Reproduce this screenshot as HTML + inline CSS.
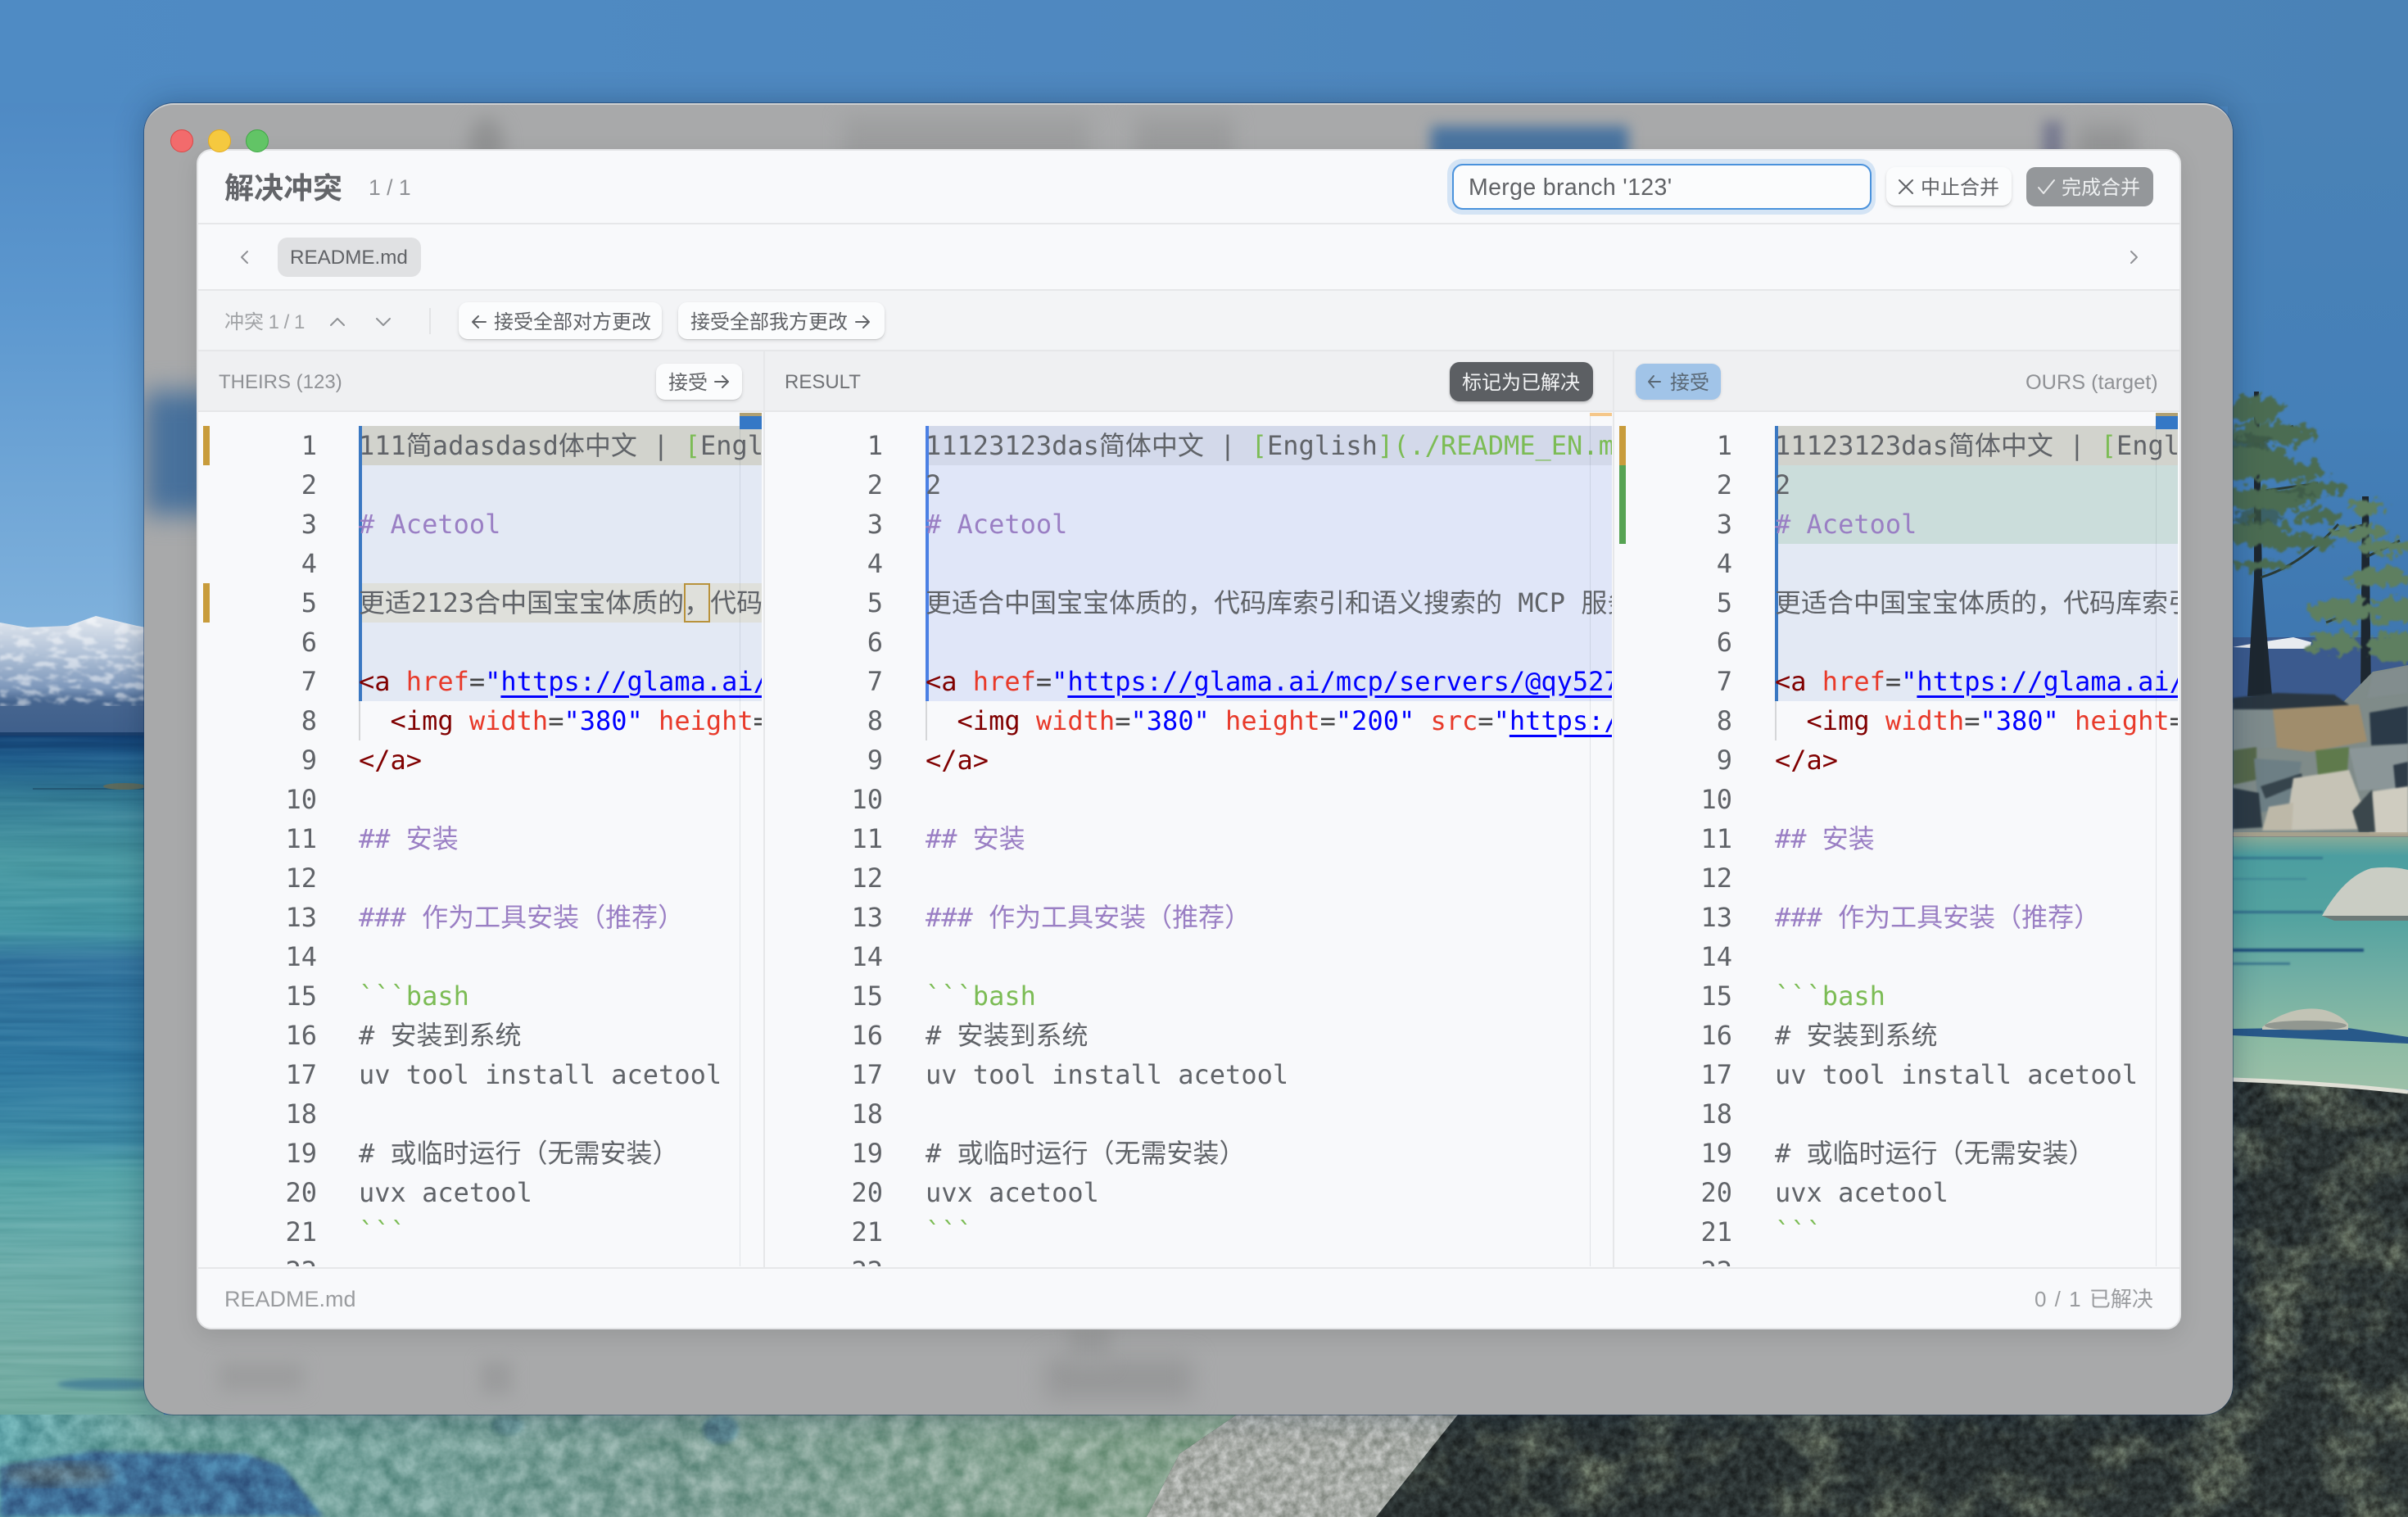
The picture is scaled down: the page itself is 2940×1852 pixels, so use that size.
<!DOCTYPE html>
<html lang="zh-CN"><head><meta charset="utf-8"><title>解决冲突</title>
<style>
html,body{margin:0;padding:0;width:2940px;height:1852px;overflow:hidden;background:#4f8ac4}
body{position:relative;font-family:"Liberation Sans","Noto Sans CJK SC",sans-serif}
.a{position:absolute;box-sizing:border-box}
.t{position:absolute;white-space:nowrap;line-height:40px;height:40px}
.btn{position:absolute;box-sizing:border-box;background:#fbfcfd;border-radius:11px;box-shadow:0 1px 1px rgba(0,0,0,.1),0 2px 4px rgba(0,0,0,.12)}
.ico{position:absolute;overflow:visible;fill:none;stroke-linecap:round;stroke-linejoin:round}
.nums,.code{position:absolute;top:520px;height:1026px;overflow:hidden;font-family:"DejaVu Sans Mono","Noto Sans CJK SC",monospace;font-size:32px;color:#606368}
.nums{text-align:right;width:60px}
.nums div,.code div{height:48px;line-height:48px;white-space:pre}
.h1{background:linear-gradient(#3a78c2,#3a78c2) 0 0/4px 100% no-repeat,#d2d3cd}
.h2{background:linear-gradient(#3a78c2,#3a78c2) 0 0/4px 100% no-repeat,#e3e9f4}
.h3{background:linear-gradient(#3a78c2,#3a78c2) 0 0/4px 100% no-repeat,#dfe0db}
.h4{background:linear-gradient(#3a78c2,#3a78c2) 0 0/4px 100% no-repeat,#cbdddb}
.r1{background:linear-gradient(#4b80e4,#4b80e4) 0 0/4px 100% no-repeat,#d3d9ea}
.r2{background:linear-gradient(#4b80e4,#4b80e4) 0 0/4px 100% no-repeat,#e0e6f8}
.g{background:linear-gradient(#d5d6d8,#d5d6d8) 0 0/2px 100% no-repeat}
.p{color:#9a7fc4}.n{color:#7cbc55}.m{color:#800000}.e{color:#e83a2a}.b{color:#0000ff}.d{color:#444}
.u{color:#0000ff;text-decoration:underline;text-decoration-thickness:3px;text-underline-offset:6px}
</style></head><body>

<svg class="a" style="left:0;top:0" width="2940" height="1852" viewBox="0 0 2940 1852" xmlns="http://www.w3.org/2000/svg">
<defs>
<linearGradient id="top" x1="0" x2="1" y1="0" y2="0"><stop offset="0" stop-color="#4f8bc4"/><stop offset=".5" stop-color="#4f88bf"/><stop offset="1" stop-color="#4a82b6"/></linearGradient>
<linearGradient id="skyL" x1="0" x2="0" y1="0" y2="1"><stop offset="0" stop-color="#4f8ac4"/><stop offset=".4" stop-color="#5d98cf"/><stop offset="1" stop-color="#7fb1dc"/></linearGradient>
<linearGradient id="skyR" x1="0" x2="0" y1="0" y2="1"><stop offset="0" stop-color="#4a82b6"/><stop offset=".5" stop-color="#4580b8"/><stop offset="1" stop-color="#3c74ae"/></linearGradient>
<linearGradient id="mtn" x1="0" x2="0" y1="0" y2="1"><stop offset="0" stop-color="#e4e9f0"/><stop offset=".3" stop-color="#b4c4d9"/><stop offset=".6" stop-color="#7e98bb"/><stop offset=".72" stop-color="#46658f"/><stop offset="1" stop-color="#3f5f8b"/></linearGradient>
<linearGradient id="wL" x1="0" x2="0" y1="897" y2="1852" gradientUnits="userSpaceOnUse">
<stop offset="0" stop-color="#123f72"/><stop offset=".03" stop-color="#1f5c8b"/><stop offset=".08" stop-color="#357d96"/><stop offset=".16" stop-color="#4b9aa3"/><stop offset=".25" stop-color="#4698a6"/><stop offset=".29" stop-color="#31729c"/><stop offset=".42" stop-color="#2f78a0"/><stop offset=".52" stop-color="#3f8ca6"/><stop offset=".56" stop-color="#55a4a8"/><stop offset=".68" stop-color="#6dadaa"/><stop offset=".79" stop-color="#74ada5"/><stop offset=".88" stop-color="#70aa9f"/><stop offset=".93" stop-color="#5f9590"/><stop offset="1" stop-color="#4a8092"/></linearGradient>
<linearGradient id="bot" x1="0" x2="1" y1="0" y2="0"><stop offset="0" stop-color="#5fa3a8"/><stop offset=".12" stop-color="#6fa39e"/><stop offset=".5" stop-color="#7c9f96"/><stop offset="1" stop-color="#8aa68e"/></linearGradient>
<linearGradient id="wR" x1="0" x2="0" y1="1020" y2="1330" gradientUnits="userSpaceOnUse"><stop offset="0" stop-color="#8aac98"/><stop offset=".08" stop-color="#4c9ea0"/><stop offset=".33" stop-color="#54a3a0"/><stop offset=".55" stop-color="#70aea4"/><stop offset=".8" stop-color="#8cbba4"/><stop offset="1" stop-color="#9cc0a8"/></linearGradient>
<filter id="blur1" color-interpolation-filters="sRGB"><feGaussianBlur stdDeviation="1"/></filter>
<filter id="blur3" color-interpolation-filters="sRGB"><feGaussianBlur stdDeviation="3"/></filter>
<filter id="blur8" color-interpolation-filters="sRGB"><feGaussianBlur stdDeviation="8"/></filter>
<filter id="streak" x="0" y="0" width="100%" height="100%" color-interpolation-filters="sRGB"><feTurbulence type="fractalNoise" baseFrequency="0.004 0.14" numOctaves="3" seed="4"/><feColorMatrix values="1 0 0 0 0 1 0 0 0 0 1 0 0 0 0 0 0 0 0 1"/></filter>
<filter id="grainRock" x="0" y="0" width="100%" height="100%" color-interpolation-filters="sRGB"><feTurbulence type="fractalNoise" baseFrequency="0.09" numOctaves="5" seed="9"/><feColorMatrix values="1.6 0 0 0 -.3 1.6 0 0 0 -.3 1.6 0 0 0 -.3 0 0 0 0 1"/></filter>
<filter id="grainBed" x="0" y="0" width="100%" height="100%" color-interpolation-filters="sRGB"><feTurbulence type="fractalNoise" baseFrequency="0.045" numOctaves="4" seed="12"/><feColorMatrix values="1.5 0 0 0 -.25 1.5 0 0 0 -.25 1.5 0 0 0 -.25 0 0 0 0 1"/></filter>
<filter id="blotch" x="0" y="0" width="100%" height="100%" color-interpolation-filters="sRGB"><feTurbulence type="fractalNoise" baseFrequency="0.012 0.016" numOctaves="5" seed="3"/><feColorMatrix values="0 0 0 0 .42 0 0 0 0 .46 0 0 0 0 .39 3 0 0 0 -1.35"/></filter>
<filter id="snow" x="0" y="0" width="100%" height="100%" color-interpolation-filters="sRGB"><feTurbulence type="fractalNoise" baseFrequency="0.05 0.12" numOctaves="3" seed="6"/><feColorMatrix values="0 0 0 0 1 0 0 0 0 1 0 0 0 0 1 6 0 0 0 -3"/><feGaussianBlur stdDeviation="1.2"/></filter>
<filter id="leaf" x="-20%" y="-20%" width="140%" height="140%" color-interpolation-filters="sRGB"><feTurbulence type="fractalNoise" baseFrequency="0.09" numOctaves="3" seed="2" result="t"/><feDisplacementMap in="SourceGraphic" in2="t" scale="26" xChannelSelector="R" yChannelSelector="G"/><feGaussianBlur stdDeviation="1"/></filter>
<clipPath id="cm"><path d="M0 760 33 766 83 764 117 752 167 764 200 770V897H0Z"/></clipPath>
<clipPath id="crock"><path d="M1400 1852 1440 1775 1510 1727 1900 1500 2726 1318 2940 1332V1852Z"/></clipPath>
<clipPath id="cleft"><rect x="0" y="897" width="180" height="955"/></clipPath>
<clipPath id="cblt"><rect x="0" y="1727" width="1600" height="125"/></clipPath>
</defs>

<rect x="0" y="0" width="2940" height="130" fill="url(#top)"/>
<rect x="0" y="126" width="180" height="640" fill="url(#skyL)"/>
<rect x="2720" y="126" width="220" height="760" fill="url(#skyR)"/>

<!-- left mountain & lake -->
<path d="M0 760 33 766 83 764 117 752 167 764 200 770V897H0Z" fill="url(#mtn)"/>
<rect x="0" y="750" width="200" height="112" fill="#fff" filter="url(#snow)" clip-path="url(#cm)" opacity=".5"/>
<rect x="0" y="897" width="200" height="955" fill="url(#wL)"/>
<rect x="0" y="897" width="200" height="955" filter="url(#streak)" opacity=".25" style="mix-blend-mode:soft-light" clip-path="url(#cleft)"/>
<rect x="0" y="894" width="200" height="4" fill="#1b3f6c"/>
<rect x="40" y="962" width="140" height="2" fill="#1c4660" opacity=".6"/>
<ellipse cx="152" cy="960" rx="26" ry="4" fill="#5c6a5c"/>
<ellipse cx="130" cy="1690" rx="60" ry="7" fill="#2f6a90" opacity=".6" filter="url(#blur3)"/>

<!-- bottom-left lakebed -->
<rect x="0" y="1727" width="1600" height="125" fill="url(#bot)"/>
<path d="M0 1790 110 1772 300 1775 345 1790 395 1852H0Z" fill="#3f6f98" filter="url(#blur3)"/>
<ellipse cx="70" cy="1800" rx="70" ry="14" fill="#7d7a66" opacity=".45" filter="url(#blur8)"/>
<ellipse cx="880" cy="1745" rx="22" ry="18" fill="#3c6e8e" opacity=".5" filter="url(#blur3)"/>
<ellipse cx="620" cy="1740" rx="20" ry="12" fill="#4f7f90" opacity=".4" filter="url(#blur3)"/>
<rect x="0" y="1727" width="1600" height="125" filter="url(#grainBed)" opacity=".28" style="mix-blend-mode:overlay" clip-path="url(#cblt)"/>

<!-- right lake -->
<rect x="2720" y="1018" width="220" height="312" fill="url(#wR)"/>
<g fill="#2a6286" filter="url(#blur1)">
<rect x="2726" y="1046" width="110" height="3" opacity=".6"/>
<rect x="2726" y="1072" width="90" height="2" opacity=".4"/>
<rect x="2726" y="1112" width="110" height="3" opacity=".8"/>
<rect x="2726" y="1158" width="160" height="4" fill="#20507c"/>
<rect x="2726" y="1175" width="70" height="3" opacity=".7"/>
</g>
<path d="M2726 1256 2860 1254 2940 1266 2940 1274 2850 1270 2726 1264Z" fill="#28598a"/>
<path d="M2835 1118Q2862 1070 2895 1060 2920 1057 2940 1062V1120Z" fill="#cacdc4"/>
<path d="M2835 1118H2940V1124H2850Z" fill="#6d7a78"/>
<path d="M2762 1254C2790 1230 2840 1220 2867 1250L2867 1257H2762Z" fill="#c2c3b5"/>
<ellipse cx="2815" cy="1252" rx="50" ry="6" fill="#7c8480" opacity=".7"/>

<!-- big rock -->
<path d="M1400 1852 1440 1775 1510 1727 1900 1500 2726 1318 2940 1332V1852Z" fill="#2b3333"/>
<rect x="1400" y="1300" width="1540" height="552" filter="url(#blotch)" clip-path="url(#crock)" opacity=".7"/>
<path d="M1400 1852 1440 1775 1510 1727H1780L1680 1852Z" fill="#a6aaa5"/>
<rect x="1400" y="1300" width="1540" height="552" filter="url(#grainRock)" clip-path="url(#crock)" opacity=".38" style="mix-blend-mode:overlay"/>
<path d="M2726 1318Q2840 1322 2940 1333" fill="none" stroke="#e0e0d6" stroke-width="5"/>

<!-- right mountains -->
<rect x="2726" y="778" width="214" height="90" fill="#3b5a8e"/>
<path d="M2726 790 2760 784 2800 778 2822 784 2820 792 2770 792Z" fill="#e7ebf0"/>

<!-- trees -->
<g fill="#1d2730">
<path d="M2752 478h6l4 230 12 142h-30l8-142Z"/>
<path d="M2884 606h8l3 244h-13Z"/>
</g>
<g fill="none" stroke="#2a3a35" stroke-width="3">
<path d="M2760 705Q2810 690 2855 640M2758 600 2830 590M2758 540 2800 520M2889 680 2930 660M2889 640 2850 650M2889 740 2840 760"/>
</g>
<g filter="url(#leaf)" fill="#4b6c52">
<ellipse cx="2755" cy="500" rx="34" ry="16"/>
<ellipse cx="2775" cy="530" rx="52" ry="14"/>
<ellipse cx="2745" cy="565" rx="50" ry="22"/>
<ellipse cx="2800" cy="575" rx="42" ry="11"/>
<ellipse cx="2825" cy="596" rx="36" ry="8"/>
<ellipse cx="2770" cy="610" rx="54" ry="14"/>
<ellipse cx="2830" cy="630" rx="28" ry="8"/>
<ellipse cx="2750" cy="650" rx="48" ry="16"/>
<ellipse cx="2800" cy="662" rx="50" ry="9"/>
<ellipse cx="2760" cy="690" rx="34" ry="7"/>
</g>
<g filter="url(#leaf)" fill="#3a5645" opacity=".7">
<ellipse cx="2750" cy="540" rx="24" ry="10"/>
<ellipse cx="2760" cy="630" rx="30" ry="9"/>
<ellipse cx="2800" cy="600" rx="22" ry="5"/>
</g>
<g filter="url(#leaf)" fill="#5e7f60">
<ellipse cx="2888" cy="618" rx="24" ry="7"/>
<ellipse cx="2880" cy="650" rx="36" ry="8"/>
<ellipse cx="2915" cy="668" rx="34" ry="9"/>
<ellipse cx="2905" cy="705" rx="38" ry="12"/>
<ellipse cx="2860" cy="745" rx="44" ry="14"/>
<ellipse cx="2925" cy="745" rx="40" ry="16"/>
<ellipse cx="2850" cy="785" rx="32" ry="14"/>
<ellipse cx="2925" cy="790" rx="34" ry="18"/>
</g>

<!-- right rocks -->
<path d="M2726 858 2800 850 2860 858 2897 820 2940 812V1022H2726Z" fill="#7f8b89"/>
<g filter="url(#blur1)">
<path d="M2726 852 2780 846 2850 848 2870 862 2780 868 2726 866Z" fill="#2a3640"/>
<path d="M2897 822 2940 814V846L2890 852Z" fill="#828d8e"/>
<path d="M2770 866 2880 860 2890 905 2820 918 2775 912Z" fill="#a08d6c"/>
<path d="M2726 866H2775L2780 912 2726 916Z" fill="#7e8b8c"/>
<path d="M2827 916 2868 912 2866 940 2830 946Z" fill="#5f7a4c"/>
<path d="M2726 916 2755 912 2755 952 2726 958Z" fill="#56684a"/>
<path d="M2752 926 2810 930 2800 985 2758 992Z" fill="#6d7f85"/>
<path d="M2760 960 2810 944 2812 956 2766 975Z" fill="#36444c"/>
<path d="M2800 950 2868 940 2895 1012 2790 1014Z" fill="#c6c3b6"/>
<path d="M2726 962 2758 968 2762 1010 2726 1012Z" fill="#2d3a44"/>
<path d="M2762 1014 2770 985 2800 980 2798 1014Z" fill="#bdb8a8"/>
<path d="M2893 870 2940 862V908L2895 910Z" fill="#2b3a48"/>
<path d="M2868 914 2940 908V962L2880 965Z" fill="#8b9698"/>
<path d="M2922 934 2940 930V962L2925 964Z" fill="#2f3c48"/>
<path d="M2897 966 2940 960V1018H2893Z" fill="#cfccc0"/>
<path d="M2872 990 2896 964 2900 1016 2880 1016Z" fill="#3b474c"/>
</g>
<path d="M2726 1016H2940V1021H2726Z" fill="#b0a68e" opacity=".8"/>
</svg>

<!-- glass window -->
<div class="a" style="left:176px;top:126px;width:2550px;height:1601px;border-radius:36px;background:#a8a9aa;overflow:hidden;box-shadow:0 0 36px rgba(10,30,60,.32),0 0 0 1px rgba(30,60,100,.5);border-top:2px solid #cfd0d0">
  <div class="a" style="left:396px;top:16px;width:44px;height:60px;background:#929394;border-radius:50%;filter:blur(10px)"></div>
  <div class="a" style="left:854px;top:16px;width:300px;height:60px;background:#9d9e9f;filter:blur(12px)"></div>
  <div class="a" style="left:1210px;top:16px;width:120px;height:60px;background:#9b9c9d;filter:blur(12px)"></div>
  <div class="a" style="left:1571px;top:26px;width:241px;height:60px;background:#4a74a0;filter:blur(8px)"></div>
  <div class="a" style="left:2318px;top:20px;width:24px;height:56px;background:#777a90;filter:blur(8px)"></div>
  <div class="a" style="left:2360px;top:24px;width:70px;height:50px;background:#959697;filter:blur(12px)"></div>
  <div class="a" style="left:0;top:350px;width:90px;height:150px;background:#48719c;filter:blur(16px)"></div>
  <div class="a" style="left:92px;top:1536px;width:102px;height:34px;background:#9c9d9e;filter:blur(10px)"></div>
  <div class="a" style="left:411px;top:1534px;width:38px;height:40px;background:#9b9c9d;filter:blur(9px)"></div>
  <div class="a" style="left:1100px;top:1530px;width:180px;height:50px;background:#979899;filter:blur(14px)"></div>
  <div class="a" style="left:1130px;top:1490px;width:50px;height:50px;background:#9c9d9e;filter:blur(10px)"></div>
</div>

<!-- dialog -->
<div class="a" style="left:240px;top:182px;width:2423px;height:1441px;border:2px solid #e4e5e7;border-radius:18px;background:#f8f9fb;box-shadow:0 8px 28px rgba(0,0,0,.1)"></div>

<!-- traffic lights -->
<div class="a" style="left:208px;top:158px;width:28px;height:28px;border-radius:50%;background:#f26b6c;border:1px solid #dd4544"></div>
<div class="a" style="left:254px;top:158px;width:28px;height:28px;border-radius:50%;background:#f5c93f;border:1px solid #e3a91f"></div>
<div class="a" style="left:300px;top:158px;width:28px;height:28px;border-radius:50%;background:#62c466;border:1px solid #3ea844"></div>

<!-- header row -->
<div class="a" style="left:242px;top:272px;width:2419px;height:2px;background:#e6e7e9"></div>
<div class="t" style="left:274px;top:210px;font-size:36px;font-weight:700;color:#636569">解决冲突</div>
<div class="t" style="left:450px;top:209px;font-size:26.5px;color:#8f9195">1 / 1</div>
<div class="a" style="left:1767px;top:194px;width:523px;height:68px;border-radius:18px;background:#d4e4f5"></div>
<div class="a" style="left:1773px;top:200px;width:512px;height:56px;border-radius:13px;background:#fbfcfd;border:2px solid #4a92dc"></div>
<div class="t" style="left:1793px;top:209px;font-size:28.5px;letter-spacing:.35px;color:#606266">Merge branch '123'</div>
<div class="btn" style="left:2303px;top:204px;width:153px;height:47px"></div>
<svg class="ico" style="left:2318px;top:219px" width="18" height="18" viewBox="0 0 18 18" stroke="#606266" stroke-width="2"><path d="M1 1 17 17M17 1 1 17"/></svg>
<div class="t" style="left:2345px;top:210px;font-size:24px;color:#606266">中止合并</div>
<div class="a" style="left:2474px;top:204px;width:155px;height:48px;border-radius:11px;background:#94979a"></div>
<svg class="ico" style="left:2488px;top:219px" width="21" height="18" viewBox="0 0 21 18" stroke="#e8e9ea" stroke-width="2"><path d="M1 10 7 17 20 1"/></svg>
<div class="t" style="left:2517px;top:210px;font-size:24px;color:#eef0f1">完成合并</div>

<!-- file row -->
<div class="a" style="left:242px;top:353px;width:2419px;height:2px;background:#e6e7e9"></div>
<svg class="ico" style="left:293px;top:306px" width="10" height="16" viewBox="0 0 10 16" stroke="#8f9195" stroke-width="2"><path d="M9 1 2 8l7 7"/></svg>
<div class="a" style="left:339px;top:290px;width:175px;height:48px;border-radius:12px;background:#e0e1e3"></div>
<div class="t" style="left:354px;top:295px;font-size:24.2px;color:#606266">README.md</div>
<svg class="ico" style="left:2601px;top:306px" width="10" height="16" viewBox="0 0 10 16" stroke="#8f9195" stroke-width="2"><path d="M1 1l7 7-7 7"/></svg>

<!-- toolbar -->
<div class="a" style="left:242px;top:355px;width:2419px;height:72px;background:#f3f4f6"></div>
<div class="a" style="left:242px;top:427px;width:2419px;height:2px;background:#e6e7e9"></div>
<div class="t" style="left:274px;top:374px;font-size:24px;word-spacing:-1px;color:#a1a3a6">冲突 1 / 1</div>
<svg class="ico" style="left:403px;top:388px" width="18" height="10" viewBox="0 0 18 10" stroke="#8f9195" stroke-width="2"><path d="M1 9 9 1l8 8"/></svg>
<svg class="ico" style="left:459px;top:388px" width="18" height="10" viewBox="0 0 18 10" stroke="#8f9195" stroke-width="2"><path d="M1 1l8 8 8-8"/></svg>
<div class="a" style="left:524px;top:376px;width:2px;height:32px;background:#e3e4e6"></div>
<div class="btn" style="left:560px;top:369px;width:248px;height:45px"></div>
<svg class="ico" style="left:576px;top:384px" width="18" height="18" viewBox="0 0 18 18" stroke="#606266" stroke-width="2"><path d="M17 9H1M8 2 1 9l7 7"/></svg>
<div class="t" style="left:603px;top:374px;font-size:24px;color:#606266">接受全部对方更改</div>
<div class="btn" style="left:828px;top:369px;width:252px;height:45px"></div>
<div class="t" style="left:843px;top:374px;font-size:24px;color:#606266">接受全部我方更改</div>
<svg class="ico" style="left:1044px;top:384px" width="18" height="18" viewBox="0 0 18 18" stroke="#606266" stroke-width="2"><path d="M1 9H17M10 2l7 7-7 7"/></svg>

<!-- column header -->
<div class="a" style="left:242px;top:429px;width:2419px;height:72px;background:#eff0f2"></div>
<div class="a" style="left:242px;top:501px;width:2419px;height:2px;background:#e6e7e9"></div>
<div class="t" style="left:267px;top:447px;font-size:24px;color:#8f9195">THEIRS (123)</div>
<div class="btn" style="left:801px;top:444px;width:105px;height:44px"></div>
<div class="t" style="left:816px;top:448px;font-size:24px;color:#606266">接受</div>
<svg class="ico" style="left:872px;top:457px" width="18" height="18" viewBox="0 0 18 18" stroke="#606266" stroke-width="2"><path d="M1 9H17M10 2l7 7-7 7"/></svg>
<div class="t" style="left:958px;top:447px;font-size:24px;color:#707276">RESULT</div>
<div class="a" style="left:1770px;top:442px;width:175px;height:48px;border-radius:12px;background:#5c5f63;box-shadow:0 2px 3px rgba(0,0,0,.2)"></div>
<div class="t" style="left:1785px;top:448px;font-size:24px;color:#f3f4f5">标记为已解决</div>
<div class="a" style="left:1997px;top:444px;width:104px;height:44px;border-radius:11px;background:#a1c4e8;box-shadow:0 1px 3px rgba(0,0,0,.12)"></div>
<svg class="ico" style="left:2012px;top:457px" width="16" height="18" viewBox="0 0 16 18" stroke="#5a6875" stroke-width="2"><path d="M15 9H1M7 2 1 9l6 7"/></svg>
<div class="t" style="left:2039px;top:448px;font-size:24px;color:#5a6875">接受</div>
<div class="t" style="left:2473px;top:447px;font-size:25.3px;color:#8f9195">OURS (target)</div>

<!-- dividers -->
<div class="a" style="left:932px;top:429px;width:2px;height:1118px;background:#e6e7e9"></div>
<div class="a" style="left:1969px;top:429px;width:2px;height:1118px;background:#e6e7e9"></div>

<!-- pane 1 -->
<div class="a" style="left:248px;top:520px;width:8px;height:48px;background:#c89c3c"></div>
<div class="a" style="left:248px;top:712px;width:8px;height:48px;background:#c89c3c"></div>
<div class="nums" style="left:327px">
<div>1</div><div>2</div><div>3</div><div>4</div><div>5</div><div>6</div><div>7</div><div>8</div><div>9</div><div>10</div><div>11</div><div>12</div><div>13</div><div>14</div><div>15</div><div>16</div><div>17</div><div>18</div><div>19</div><div>20</div><div>21</div><div>22</div>
</div>
<div class="code" style="left:438px;width:492px">
<div class="h1">111简adasdasd体中文 | <span class="n">[</span>English<span class="n">](./README_EN.md)</span></div>
<div class="h2"></div>
<div class="h2"><span class="p"># Acetool</span></div>
<div class="h2"></div>
<div class="h3">更适2123合中国宝宝体质的，代码库索引和语义搜索的 MCP 服务器</div>
<div class="h2"></div>
<div class="h2"><span class="m">&lt;a</span> <span class="e">href</span><span class="d">=</span><span class="b">"</span><span class="u">https://glama.ai/mcp/servers/@qy527145/acetool</span><span class="b">"</span><span class="m">&gt;</span></div>
<div class="g">  <span class="m">&lt;img</span> <span class="e">width</span><span class="d">=</span><span class="b">"380"</span> <span class="e">height</span><span class="d">=</span><span class="b">"200"</span></div>
<div><span class="m">&lt;/a&gt;</span></div>
<div></div>
<div><span class="p">## 安装</span></div>
<div></div>
<div><span class="p">### 作为工具安装（推荐）</span></div>
<div></div>
<div><span class="n">&#96;&#96;&#96;bash</span></div>
<div># 安装到系统</div>
<div>uv tool install acetool</div>
<div></div>
<div># 或临时运行（无需安装）</div>
<div>uvx acetool</div>
<div><span class="n">&#96;&#96;&#96;</span></div>
</div>
<div class="a" style="left:835px;top:712px;width:32px;height:48px;border:2px solid #b8923c"></div>
<div class="a" style="left:903px;top:504px;width:1px;height:1042px;background:rgba(60,70,90,.12)"></div>
<div class="a" style="left:903px;top:504px;width:27px;height:4px;background:#b0a072"></div>
<div class="a" style="left:903px;top:508px;width:27px;height:16px;background:#3578c6"></div>

<!-- pane 2 -->
<div class="nums" style="left:1018px">
<div>1</div><div>2</div><div>3</div><div>4</div><div>5</div><div>6</div><div>7</div><div>8</div><div>9</div><div>10</div><div>11</div><div>12</div><div>13</div><div>14</div><div>15</div><div>16</div><div>17</div><div>18</div><div>19</div><div>20</div><div>21</div><div>22</div>
</div>
<div class="code" style="left:1130px;width:838px">
<div class="r1">11123123das简体中文 | <span class="n">[</span>English<span class="n">](./README_EN.md)</span></div>
<div class="r2">2</div>
<div class="r2"><span class="p"># Acetool</span></div>
<div class="r2"></div>
<div class="r2">更适合中国宝宝体质的，代码库索引和语义搜索的 MCP 服务器</div>
<div class="r2"></div>
<div class="r2"><span class="m">&lt;a</span> <span class="e">href</span><span class="d">=</span><span class="b">"</span><span class="u">https://glama.ai/mcp/servers/@qy527145/acetool</span><span class="b">"</span><span class="m">&gt;</span></div>
<div class="g">  <span class="m">&lt;img</span> <span class="e">width</span><span class="d">=</span><span class="b">"380"</span> <span class="e">height</span><span class="d">=</span><span class="b">"200"</span> <span class="e">src</span><span class="d">=</span><span class="b">"</span><span class="u">https://glama.ai/mcp/servers/badge</span></div>
<div><span class="m">&lt;/a&gt;</span></div>
<div></div>
<div><span class="p">## 安装</span></div>
<div></div>
<div><span class="p">### 作为工具安装（推荐）</span></div>
<div></div>
<div><span class="n">&#96;&#96;&#96;bash</span></div>
<div># 安装到系统</div>
<div>uv tool install acetool</div>
<div></div>
<div># 或临时运行（无需安装）</div>
<div>uvx acetool</div>
<div><span class="n">&#96;&#96;&#96;</span></div>
</div>
<div class="a" style="left:1941px;top:504px;width:1px;height:1042px;background:rgba(60,70,90,.12)"></div>
<div class="a" style="left:1941px;top:504px;width:27px;height:4px;background:#f5c78a"></div>

<!-- pane 3 -->
<div class="a" style="left:1977px;top:520px;width:8px;height:48px;background:#c89c3c"></div>
<div class="a" style="left:1977px;top:568px;width:8px;height:96px;background:#56a353"></div>
<div class="nums" style="left:2055px">
<div>1</div><div>2</div><div>3</div><div>4</div><div>5</div><div>6</div><div>7</div><div>8</div><div>9</div><div>10</div><div>11</div><div>12</div><div>13</div><div>14</div><div>15</div><div>16</div><div>17</div><div>18</div><div>19</div><div>20</div><div>21</div><div>22</div>
</div>
<div class="code" style="left:2167px;width:492px">
<div class="h1">11123123das简体中文 | <span class="n">[</span>English<span class="n">](./README_EN.md)</span></div>
<div class="h4">2</div>
<div class="h4"><span class="p"># Acetool</span></div>
<div class="h2"></div>
<div class="h2">更适合中国宝宝体质的，代码库索引和语义搜索的 MCP 服务器</div>
<div class="h2"></div>
<div class="h2"><span class="m">&lt;a</span> <span class="e">href</span><span class="d">=</span><span class="b">"</span><span class="u">https://glama.ai/mcp/servers/@qy527145/acetool</span><span class="b">"</span><span class="m">&gt;</span></div>
<div class="g">  <span class="m">&lt;img</span> <span class="e">width</span><span class="d">=</span><span class="b">"380"</span> <span class="e">height</span><span class="d">=</span><span class="b">"200"</span></div>
<div><span class="m">&lt;/a&gt;</span></div>
<div></div>
<div><span class="p">## 安装</span></div>
<div></div>
<div><span class="p">### 作为工具安装（推荐）</span></div>
<div></div>
<div><span class="n">&#96;&#96;&#96;bash</span></div>
<div># 安装到系统</div>
<div>uv tool install acetool</div>
<div></div>
<div># 或临时运行（无需安装）</div>
<div>uvx acetool</div>
<div><span class="n">&#96;&#96;&#96;</span></div>
</div>
<div class="a" style="left:2632px;top:504px;width:1px;height:1042px;background:rgba(60,70,90,.12)"></div>
<div class="a" style="left:2632px;top:504px;width:27px;height:4px;background:#b0a072"></div>
<div class="a" style="left:2632px;top:508px;width:27px;height:16px;background:#3578c6"></div>

<!-- footer -->
<div class="a" style="left:242px;top:1547px;width:2419px;height:2px;background:#e6e7e9"></div>
<div class="t" style="left:274px;top:1566px;font-size:27px;color:#9a9c9f">README.md</div>
<div class="t" style="left:2484px;top:1566px;font-size:26px;word-spacing:3px;color:#9a9c9f">0 / 1 已解决</div>

</body></html>
